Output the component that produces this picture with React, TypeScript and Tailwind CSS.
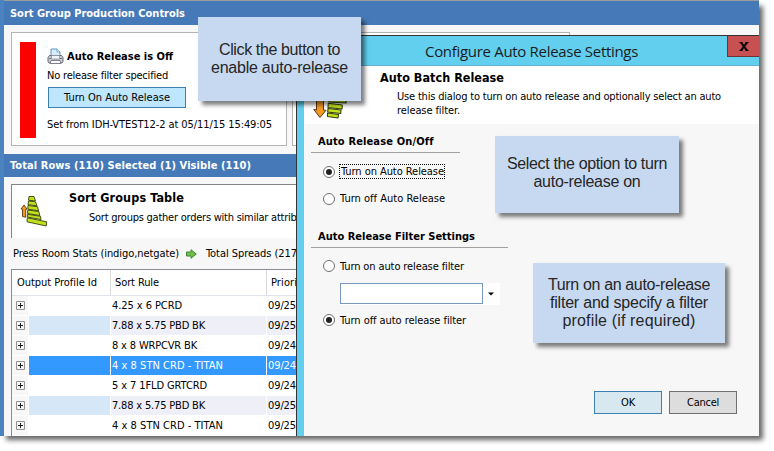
import { useLayoutEffect, useRef, type ReactNode } from "react";

const UI = "font-['DejaVu_Sans_Condensed','DejaVu_Sans',sans-serif] [font-stretch:condensed]";

/* One line of text whose tracking is adjusted so that it spans w pixels. */
function T({ w, children, className = "" }: { w: number; children: string; className?: string }) {
  const ref = useRef<HTMLSpanElement>(null);
  useLayoutEffect(() => {
    const el = ref.current;
    if (!el) return;
    el.style.letterSpacing = "0px";
    const natural = el.getBoundingClientRect().width;
    el.style.letterSpacing = `${(w - natural) / children.length}px`;
  }, [w, children]);
  return (
    <span ref={ref} className={`inline-block whitespace-pre ${className}`}>
      {children}
    </span>
  );
}

function Printer() {
  return (
    <svg width="17" height="17" viewBox="0 0 17 17" className="shrink-0">
      <path d="M4 8V1h6l3 3v4z" fill="#d9edfc" stroke="#5d93c4" />
      <path d="M10 1v3h3" fill="#fff" stroke="#5d93c4" strokeWidth=".8" />
      <path d="M2.5 7.5h12l1.500 2v4l-1 1.500h-13l-1-1.500v-4z" fill="#c9ccd1" stroke="#666a72" />
      <path d="M4.500 7.500h8v3.500h-8z" fill="#eff6fb" stroke="#838a94" strokeWidth=".7" />
      <path d="M4 12.500h9l.8 3H3.200z" fill="#fff" stroke="#666a72" strokeWidth=".8" />
      <path d="M2 10.500h2M13 10.500h2" stroke="#777" />
    </svg>
  );
}

function SortIcon() {
  return (
    <svg width="28" height="32" viewBox="0 0 28 32" className="shrink-0">
      <g fill="#c3e01c" stroke="#333f0c" strokeWidth=".9" strokeLinejoin="round">
        <path d="M9 1.500h5l1.500 4.500-7-.8z" />
        <path d="M8.500 6l7 .8 1.500 4-9-1.200z" />
        <path d="M8 10.500l9.500 1.200 1 4L7.800 14.200z" />
        <path d="M7.800 15l11 1.500 1 4-12.300-2z" />
        <path d="M7.500 19.300l13 2 .5 3.200-13.700-2.500z" />
        <path d="M7.300 22.800l19.400 4-.5 4.200L7 26.800z" />
      </g>
      <path d="M4 10l3 4-1.300.3v8L2.500 21.500v-7.300L1 14z" fill="#f39a24" stroke="#5a3510" strokeWidth=".9" />
    </svg>
  );
}

function ReleaseIcon() {
  return (
    <svg width="34" height="36" viewBox="0 0 34 36">
      <g fill="#c3e01c" stroke="#333f0c" strokeWidth="1.1" strokeLinejoin="round">
        <path d="M16 15.500l17 1v3.500l-17-1z" />
        <path d="M15.300 20.300l14 1.700-.3 4-14-1.500z" />
        <path d="M15 25.500l13 1.500-.3 3.500-13-1.500z" />
        <path d="M14.500 30l11 1.500-.5 3.500-10.500-1.500z" />
      </g>
      <path d="M3.500 15h7v12l2.500.3L7 34.500.800 26.500l2.700.5z" fill="#f39a24" stroke="#5a3510" />
    </svg>
  );
}

function Arrow() {
  return (
    <svg width="11" height="10" viewBox="0 0 11 10" className="shrink-0">
      <path d="M.5 3h4.500V.7L10.300 5 5 9.300V7H.5z" fill="#72bd50" stroke="#41862f" />
    </svg>
  );
}

function Radio({ on = false }: { on?: boolean }) {
  return (
    <span className="flex size-3 shrink-0 items-center justify-center rounded-full border border-[#707070] bg-white">
      {on && <span className="size-1.5 rounded-full bg-[#222]" />}
    </span>
  );
}

function Expand() {
  return (
    <svg width="9" height="9" viewBox="0 0 9 9">
      <path d="M.5.5h8v8h-8z" fill="#f4f4f4" stroke="#929292" />
      <path d="M2 4.500h5M4.500 2v5" stroke="#222" />
    </svg>
  );
}

function Callout({ className, children }: { className: string; children: ReactNode }) {
  return (
    <div
      className={`absolute flex flex-col items-center bg-[#c6d9f1] font-['Liberation_Sans',Arial,sans-serif] text-[16px] leading-[18px] text-[#262626] shadow-[4px_4px_4px_0px_rgba(0,0,0,0.5)] ${className}`}
    >
      {children}
    </div>
  );
}

const rows = [
  { rule: "4.25 x 6 PCRD", w: 70, date: "09/25" },
  { rule: "7.88 x 5.75 PBD BK", w: 93, date: "09/25" },
  { rule: "8 x 8 WRPCVR BK", w: 85, date: "09/24" },
  { rule: "4 x 8 STN CRD - TITAN", w: 111, date: "09/24" },
  { rule: "5 x 7 1FLD GRTCRD", w: 95, date: "09/24" },
  { rule: "7.88 x 5.75 PBD BK", w: 93, date: "09/25" },
  { rule: "4 x 8 STN CRD - TITAN", w: 111, date: "09/25" },
];

function ControlsPanel() {
  return (
    <section className="h-[154px]">
      <header className="h-[25px] border-t border-[#9b9da0] bg-[#4679b7] pt-[5px] pl-1.5 text-[11px] leading-4 font-bold text-white">
        <T w={175}>Sort Group Production Controls</T>
      </header>
      <div className="flex h-[129px] gap-[5px] bg-[#f7f7f7] pt-[7px] pl-[7px]">
        <div className="flex h-[114px] w-[276px] border border-[#b4b4b4] bg-white pt-[9px] pl-2">
          <div className="h-24 w-4 bg-[#fe0000]" />
          <div className="flex flex-col pt-1.5 pl-[11px]">
            <div className="flex h-[17px] items-center gap-[3px] text-[11px] font-bold">
              <Printer />
              <T w={106}>Auto Release is Off</T>
            </div>
            <div className="mt-[3px] h-4 leading-4">
              <T w={121}>No release filter specified</T>
            </div>
            <button className="mt-[3px] ml-px flex h-[21px] w-[138px] items-center justify-center border border-[#3c7fb1] bg-[#bee6fd]">
              <T w={106}>Turn On Auto Release</T>
            </button>
            <div className="mt-[9px] h-4 leading-4">
              <T w={225}>Set from IDH-VTEST12-2 at 05/11/15 15:49:05</T>
            </div>
          </div>
        </div>
        <div className="h-[114px] w-[278px] border border-[#b4b4b4] bg-white" />
      </div>
    </section>
  );
}

function TablePanel() {
  return (
    <section className="h-[282px] bg-[#f7f7f7]">
      <header className="h-[23px] bg-[#4679b7] pt-1 pl-1.5 text-[11px] leading-4 font-bold text-white">
        <T w={241}>Total Rows (110) Selected (1) Visible (110)</T>
      </header>
      <div className="mt-[7px] ml-[7px] flex h-[54px] border-t border-l border-[#858585] bg-white pt-2.5 pl-2">
        <SortIcon />
        <div className="pl-[21px]">
          <div className="-mt-[6px] h-[18px] text-[12.500px] leading-[18px] font-bold">
            <T w={115}>Sort Groups Table</T>
          </div>
          <div className="mt-0.5 pl-5 leading-[18px]">
            <T w={228}>Sort groups gather orders with similar attributes</T>
          </div>
        </div>
      </div>
      <div className="flex h-[31px] items-center pl-[9px]">
        <T w={166}>Press Room Stats (indigo,netgate)</T>
        <span className="ml-[7px] flex">
          <Arrow />
        </span>
        <T w={91} className="ml-[9px]">
          Total Spreads (217
        </T>
      </div>
      <div className="ml-[7px] border-t border-l border-[#8a8c95] bg-white">
        <div className="flex h-[26px] items-center border-b border-[#dfe3ea]">
          <div className="flex h-full w-[99px] items-center border-r border-[#d9d9d9] pl-[5px]">
            <T w={80}>Output Profile Id</T>
          </div>
          <div className="flex h-full w-[156px] items-center border-r border-[#d9d9d9] pl-1">
            <T w={44}>Sort Rule</T>
          </div>
          <div className="flex h-full items-center pl-1">
            <T w={36}>Priority</T>
          </div>
        </div>
        {rows.map((r, i) => {
          const selected = i === 3;
          const tinted = i % 4 === 1;
          const cell = selected ? "bg-[#3399ff] text-white" : tinted ? "bg-[#efeff8]" : "bg-white";
          const first = selected ? "bg-[#3399ff]" : tinted ? "bg-[#d6e7f7]" : "bg-white";
          return (
            <div key={i} className="flex h-5 gap-px pb-px leading-[19px]">
              <div className="flex w-4 items-center bg-[#f7f7f7] pl-1">
                <Expand />
              </div>
              <div className={`w-[81px] ${first}`} />
              <div className={`w-[155px] pl-px ${cell}`}>
                <T w={r.w}>{r.rule}</T>
              </div>
              <div className={`flex-1 pl-px ${cell}`}>
                <T w={28}>{r.date}</T>
              </div>
            </div>
          );
        })}
      </div>
    </section>
  );
}

function Dialog() {
  return (
    <div className="absolute top-[35px] left-[296px] flex h-[401px] w-[463px] flex-col border-t border-l border-[#333] bg-[#62cfef] pl-[7px]">
      <div className="-ml-[7px] flex h-[30px] shrink-0 justify-between border-b border-[#69afd0]">
        <div className="pt-[5px] pl-32 font-['Open_Sans','Noto_Sans',sans-serif] text-[15px] leading-5 text-[#1c1c1c] [font-stretch:normal]">
          <T w={213}>Configure Auto Release Settings</T>
        </div>
        <button className="flex h-[21px] w-8 items-center justify-center border-b border-l border-[#6b3535] bg-[#c75050]">
          <svg width="10" height="9" viewBox="0 0 10 9">
            <path d="M2 .5l6 8M8 .5l-6 8" stroke="#000" strokeWidth="2" />
            <path d="M.5.6h3M6.500.6h3M.5 8.400h3M6.500 8.400h3" stroke="#000" strokeWidth="1" />
          </svg>
        </button>
      </div>
      <div className="flex h-[58px] shrink-0 bg-white">
        <div className="w-[76px] pt-[17px] pl-[9px]">
          <ReleaseIcon />
        </div>
        <div>
          <div className="pt-[3px] text-[12.500px] leading-[18px] font-bold">
            <T w={124}>Auto Batch Release</T>
          </div>
          <div className="mt-[3px] pl-[17px] leading-[14px]">
            <T w={324}>Use this dialog to turn on auto release and optionally select an auto</T>
            <br />
            <T w={63}>release filter.</T>
          </div>
        </div>
      </div>
      <div className="flex-1 bg-[#f7f7f7] pl-[7px]">
        <div className="h-[29px] w-[149px] border-b border-[#a0a0a0] pt-2.5 pl-[7px] text-[11px] leading-4 font-bold">
          <T w={115}>Auto Release On/Off</T>
        </div>
        <div className="mt-2.5 flex h-[17px] items-center gap-[5px] pl-3">
          <Radio on />
          <span className="flex h-[13px] items-center pl-px outline-1 outline-dotted outline-black">
            <T w={103} className="leading-[13px]">
              Turn on Auto Release
            </T>
          </span>
        </div>
        <div className="mt-2.5 flex h-[17px] items-center gap-[5px] pl-3">
          <Radio />
          <T w={105}>Turn off Auto Release</T>
        </div>
        <div className="mt-[21px] h-5 w-[197px] border-b border-[#a0a0a0] pt-px pl-[7px] text-[11px] leading-4 font-bold">
          <T w={157}>Auto Release Filter Settings</T>
        </div>
        <div className="mt-[9px] flex h-[17px] items-center gap-[5px] pl-3">
          <Radio />
          <T w={124} className="pt-0.5">
            Turn on auto release filter
          </T>
        </div>
        <div className="mt-[9px] ml-[29px] flex h-[22px] w-[160px] bg-white">
          <div className="h-[21px] w-[143px] border border-[#7799bd] bg-white" />
          <svg width="17" height="22" viewBox="0 0 17 22">
            <path d="M5 9.500h6L8 12.500z" fill="#000" />
          </svg>
        </div>
        <div className="mt-[6px] flex h-[17px] items-center gap-[5px] pl-3">
          <Radio on />
          <T w={126} className="pt-0.5">
            Turn off auto release filter
          </T>
        </div>
        <div className="mt-[63px] flex gap-[7px] pl-[283px]">
          <button className="flex h-[23px] w-[68px] items-center justify-center border border-[#3c7fb1] bg-[#d7e8f1]">
            <T w={14}>OK</T>
          </button>
          <button className="flex h-[23px] w-[68px] items-center justify-center border border-[#707070] bg-[#dddddd]">
            <T w={32}>Cancel</T>
          </button>
        </div>
      </div>
    </div>
  );
}

export default function App() {
  return (
    <div className="h-[451px] w-[774px] overflow-hidden bg-white">
      <main
        className={`relative h-[436px] w-[759px] bg-white text-[11px] leading-4 text-black shadow-[5px_5px_5px_-1px_rgba(0,0,0,0.6)] ${UI}`}
      >
        <div className="h-full border-l-4 border-[#4a83bf]">
          <ControlsPanel />
          <TablePanel />
        </div>
        <Dialog />
        <Callout className="top-[17px] left-[198px] h-[84px] w-[163px] pt-[24px]">
          <T w={121}>Click the button to</T>
          <T w={137}>enable auto-release</T>
        </Callout>
        <Callout className="top-[136px] left-[495px] h-[77px] w-[184px] pt-[19px]">
          <T w={160}>Select the option to turn</T>
          <T w={107}>auto-release on</T>
        </Callout>
        <Callout className="top-[263px] left-[533px] h-[80px] w-[192px] pt-[13px]">
          <T w={162}>Turn on an auto-release</T>
          <T w={158}>filter and specify a filter</T>
          <T w={133}>profile (if required)</T>
        </Callout>
      </main>
    </div>
  );
}
